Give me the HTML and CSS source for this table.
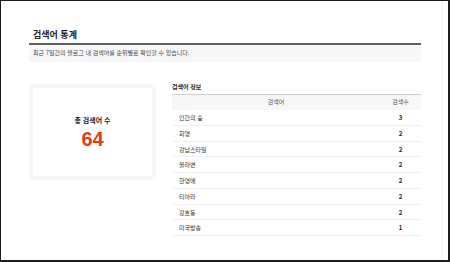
FILE: index.html
```html
<!DOCTYPE html>
<html lang="ko">
<head>
<meta charset="utf-8">
<link rel="stylesheet" href="styles.css">
</head>
<body>
<div class="frame">
  <div class="inner">
    <div class="content">
      <h1 class="title">검색어 통계</h1>
      <p class="desc">최근 7일간의 블로그 내 검색어를 순위별로 확인할 수 있습니다.</p>
      <div class="row">
        <div class="card">
          <div class="card-label">총 검색어 수</div>
          <div class="card-num">64</div>
        </div>
        <div class="info">
          <div class="info-title">검색어 정보</div>
          <div class="table">
            <div class="tr th"><span class="c1">검색어</span><span class="c2">검색수</span></div>
            <div class="tr"><span class="c1">인간의 숲</span><span class="c2">3</span></div>
            <div class="tr"><span class="c1">회영</span><span class="c2">2</span></div>
            <div class="tr"><span class="c1">강남스타일</span><span class="c2">2</span></div>
            <div class="tr"><span class="c1">불라변</span><span class="c2">2</span></div>
            <div class="tr"><span class="c1">한영애</span><span class="c2">2</span></div>
            <div class="tr"><span class="c1">티아라</span><span class="c2">2</span></div>
            <div class="tr"><span class="c1">강호동</span><span class="c2">2</span></div>
            <div class="tr"><span class="c1">미국방송</span><span class="c2">1</span></div>
          </div>
        </div>
      </div>
    </div>
  </div>
</div>
</body>
</html>
```
FILE: styles.css
```css
* { box-sizing: border-box; }
html, body { margin: 0; padding: 0; background: #fff; }
body {
  font-family: "Noto Sans CJK KR", "Noto Sans", sans-serif;
  color: #333;
}
.frame {
  width: 450px;
  height: 262px;
  border-top: 1px solid #1c1c1c;
  border-left: 1px solid #1c1c1c;
  border-right: 2px solid #1c1c1c;
  border-bottom: 2px solid #1c1c1c;
  overflow: hidden;
}
.inner {
  width: 442px;
  height: 100%;
  border-right: 1px solid #f0f0f0;
}
.content {
  padding: 26px 0 0 28px;
  width: 420px;
}
.title {
  margin: 0;
  height: 18px;
  line-height: 16px;
  font-size: 9px;
  font-weight: 700;
  color: #222;
  padding-left: 4px;
  border-bottom: 2px solid #5e5e5e;
}
.desc {
  margin: 0;
  height: 17px;
  line-height: 16px;
  background: #f7f7f7;
  font-size: 6px;
  color: #444;
  padding-left: 4px;
}
.row {
  display: flex;
  align-items: flex-start;
  gap: 16px;
  margin-top: 18px;
}
.card {
  margin-top: 4px;
  width: 127px;
  height: 96px;
  border: 4px solid #f6f6f6;
  display: flex;
  flex-direction: column;
  align-items: center;
  justify-content: center;
  padding-top: 2px;
}
.card-label {
  font-size: 7px;
  font-weight: 700;
  color: #222;
  line-height: 10px;
}
.card-num {
  margin-top: 2px;
  font-family: "Liberation Sans", Arial, sans-serif;
  font-size: 20px;
  font-weight: 700;
  color: #e63a12;
  line-height: 24px;
}
.info {
  flex: 1;
}
.info-title {
  height: 15px;
  line-height: 14px;
  font-size: 6px;
  font-weight: 700;
  color: #222;
  border-bottom: 1px solid #cfcfcf;
}
.tr {
  display: grid;
  grid-template-columns: 208px 1fr;
  height: 15.75px;
  line-height: 15px;
  border-bottom: 1px solid #f0f0f0;
  font-size: 6px;
}
.tr .c1 { padding-left: 7px; }
.tr .c2 { text-align: center; font-weight: 700; color: #222; }
.th {
  height: 15px;
  line-height: 14px;
  background: #f7f7f7;
  border-bottom: 1px solid #f7f7f7;
  color: #555;
}
.th .c1 { text-align: center; padding-left: 0; }
.th .c2 { font-weight: 400; color: #555; }
```
